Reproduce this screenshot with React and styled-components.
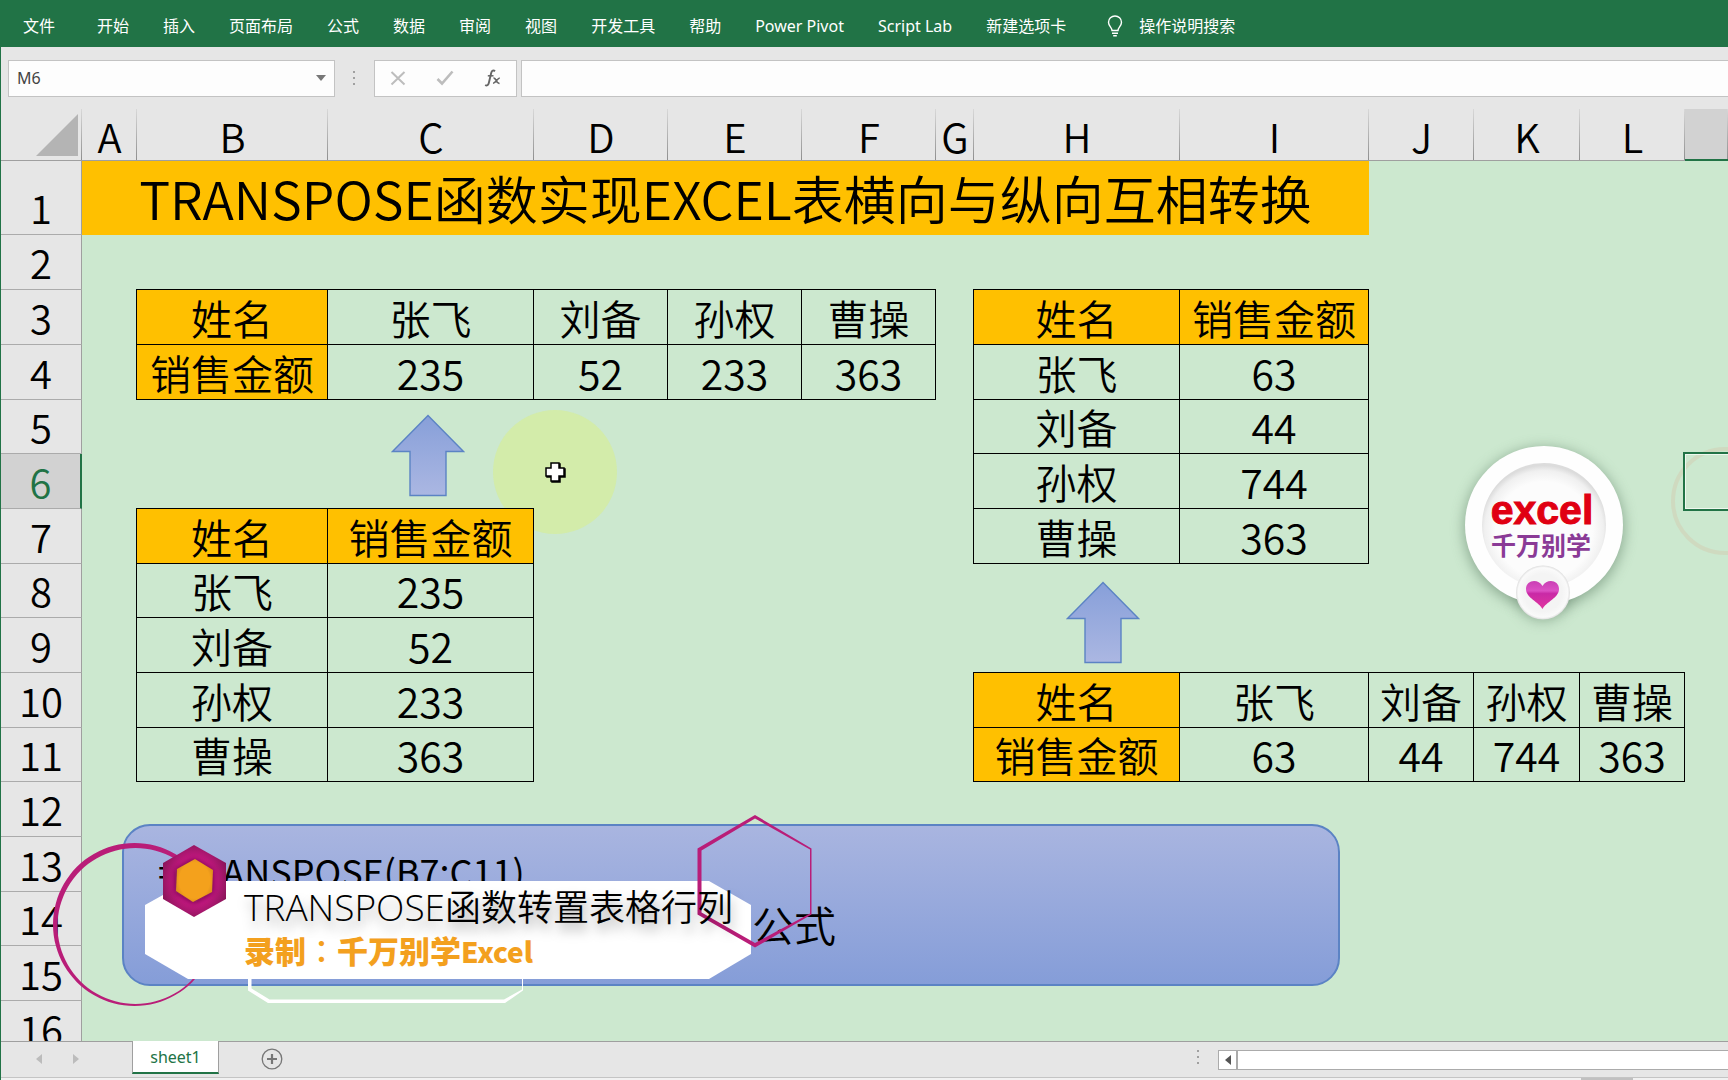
import React from "react";
import styled, { createGlobalStyle } from "styled-components";

const GREEN = "#217346";
const CHROME = "#e6e6e6";
const LINE = "#9f9f9f";
const SHEET = "#cce8cf";
const ORANGE = "#ffc000";
const PINK = "#b91d78";
const SHAPELINE = "#5b83c4";
const CJK = '"Noto Sans CJK SC", sans-serif';
const UIFONT = '"Noto Sans", "Noto Sans CJK SC", sans-serif';

const GlobalStyle = createGlobalStyle`
  * { box-sizing: border-box; }
  body { margin: 0; background: ${CHROME}; }
  button, input { font: inherit; color: inherit; margin: 0; padding: 0; border: 0; background: none; }
`;

const Page = styled.div`
  display: flex;
  flex-direction: column;
  height: 100vh;
  overflow: hidden;
  background: ${CHROME};
  font-family: ${UIFONT};
`;

const Ribbon = styled.nav`
  display: flex;
  align-items: center;
  gap: 34px;
  height: 47px;
  padding: 4px 23px 0;
  flex: none;
  background: ${GREEN};
  color: #fff;
  font-size: 16px;
  line-height: 24px;
  white-space: nowrap;
`;

const RibbonTab = styled.button`
  margin-right: ${props => (props.$file ? "8px" : "0")};
`;

const TellMe = styled.button`
  display: flex;
  align-items: center;
  gap: 16px;
  margin-left: 7px;
`;

const Body = styled.div`
  display: flex;
  flex-direction: column;
  flex: 1;
  min-height: 0;
  border-left: 1px solid ${GREEN};
`;

const FormulaBar = styled.div`
  display: flex;
  align-items: center;
  height: 62px;
  padding-left: 7px;
  flex: none;
`;

const Box = styled.div`
  display: flex;
  align-items: center;
  height: 37px;
  background: #fdfdfd;
  border: 1px solid #c3c3c3;
`;

const NameBox = styled(Box)`
  width: 327px;
  padding: 0 4px 0 8px;
  color: #444;
  font-size: 16px;

  input {
    flex: 1;
    min-width: 0;
  }
  button {
    display: flex;
    padding: 4px;
  }
`;

const Grip = styled.div`
  display: flex;
  flex-direction: column;
  gap: 4px;
  margin: 0 19px 0 18px;

  i {
    width: 2px;
    height: 2px;
    background: #a0a0a0;
  }
`;

const FxBox = styled(Box)`
  width: 143px;
  margin-right: 4px;
  gap: 30px;
  padding-left: 15px;

  button {
    display: flex;
  }
`;

const FormulaBox = styled(Box)`
  flex: 1;
  border-right: 0;

  input {
    width: 100%;
    padding: 0 8px;
  }
`;

const Sheet = styled.main`
  position: relative;
  flex: 1;
  min-height: 0;
  overflow: hidden;
  background: ${SHEET};
  font-family: ${CJK};
`;

const Grid = styled.table`
  position: relative;
  width: 100%;
  table-layout: fixed;
  border-collapse: separate;
  border-spacing: 0;
  font-size: 41px;
  font-weight: 350;
  line-height: 53px;
  color: #000;
`;

const Col = styled.col`
  width: ${props => (props.$w ? props.$w + "px" : "auto")};
`;

const ColHead = styled.th`
  height: 52px;
  padding: 0;
  font-size: 40px;
  font-weight: 350;
  line-height: 48px;
  vertical-align: bottom;
  background:
    linear-gradient(#d8d8d8, #8f8f8f) right / 1px 100% no-repeat,
    ${props => (props.$active ? "#d2d2d2" : CHROME)};
  border-bottom: ${props =>
    props.$active ? `2px solid ${GREEN}` : `1px solid ${LINE}`};
`;

const Corner = styled(ColHead)`
  svg {
    display: block;
    margin: 0 4px 4px auto;
  }
`;

const RowHead = styled.th`
  padding: 0;
  font-size: 40px;
  font-weight: 350;
  vertical-align: bottom;
  color: ${props => (props.$active ? GREEN : "#000")};
  background: ${props => (props.$active ? "#d2d2d2" : CHROME)};
  border-bottom: 1px solid #ababab;
  border-right: ${props =>
    props.$active ? `2px solid ${GREEN}` : `1px solid ${LINE}`};
`;

const Row = styled.tr`
  height: ${props => props.$h}px;
`;

const Cell = styled.td`
  padding: 0;
  text-align: center;
  vertical-align: bottom;
  white-space: nowrap;
  background: ${props => (props.$head ? ORANGE : "transparent")};
  ${props =>
    props.$boxed &&
    `
    border-right: 1px solid #000;
    border-bottom: 1px solid #000;
    box-shadow: -1px 0 #000, 0 -1px #000, -1px -1px #000;
  `}
`;

const TitleCell = styled(Cell)`
  background: ${ORANGE};
  font-size: 52px;
  line-height: 74px;
`;

/* objects that float over the cells */
const Floating = styled.div`
  position: absolute;
  left: ${props => props.$x}px;
  top: ${props => props.$y}px;

  > svg {
    display: block;
  }
`;

const Selection = styled(Floating)`
  right: -4px;
  height: 59px;
  border: 2px solid ${GREEN};
  box-shadow: inset 0 0 0 1px #eef8ef;
`;

const FormulaShape = styled(Floating)`
  width: 1218px;
  height: 162px;
  padding: 18px 34px;
  border: 2px solid ${SHAPELINE};
  border-radius: 28px;
  background: linear-gradient(#a9b5e0, #859dd8);
  font-size: 36px;
  line-height: 53px;
  white-space: nowrap;
`;

const ShapeLine = styled.p`
  margin: 0;
`;

const ShapeNote = styled(ShapeLine)`
  padding-left: 594px;
  font-size: 42px;
  font-weight: 350;
`;

const BannerTitle = styled(Floating)`
  font-family: "Open Sans", ${CJK};
  font-size: 37px;
  font-weight: 300;
  line-height: 48px;
  white-space: nowrap;
  color: #000;
  text-shadow: 2px 8px 12px rgba(0, 0, 0, 0.35);

  span {
    font-family: ${CJK};
    font-size: 36px;
    font-weight: 350;
  }
`;

const BannerAuthor = styled(Floating)`
  font-size: 31px;
  font-weight: 900;
  line-height: 40px;
  white-space: nowrap;
  color: #f3a01e;
`;

const Colon = styled.span`
  font-family: "Noto Sans CJK TC", sans-serif;
  font-weight: 500;
`;

const Latin = styled.span`
  font-size: 28px;
`;

const BottomBar = styled.footer`
  display: flex;
  align-items: flex-start;
  height: 37px;
  flex: none;
  border-top: 1px solid ${LINE};
  border-bottom: 1px solid #c4c4c4;
`;

const SheetNav = styled.div`
  display: flex;
  gap: 27px;
  width: 131px;
  padding: 12px 0 0 34px;

  button {
    display: flex;
  }
`;

const SheetTab = styled.button`
  width: 87px;
  height: 33px;
  margin-top: -1px;
  background: #fff;
  color: ${GREEN};
  font-size: 16px;
  line-height: 30px;
  border: 1px solid ${LINE};
  border-top: 0;
  border-bottom: 2px solid ${GREEN};
`;

const AddSheet = styled.button`
  display: flex;
  margin: 6px 0 0 42px;
`;

const Scroll = styled.div`
  display: flex;
  align-items: flex-start;
  width: 549px;
  margin-left: auto;
  padding-top: 8px;
`;

const ScrollTrack = styled.div`
  display: flex;
  flex: 1;
  height: 20px;
  background: #fff;
  border: 1px solid #ababab;
  border-right: 0;

  button {
    display: flex;
    align-items: center;
    justify-content: center;
    width: 19px;
    border-right: 2px solid #ababab;
  }
`;

const StatusStrip = styled.div`
  display: flex;
  justify-content: flex-end;
  height: 2px;
  padding-right: 95px;
  background: #f1f1f1;
  flex: none;

  i {
    width: 52px;
    background: #c0c0c0;
  }
`;

const tabs = [
  "开始",
  "插入",
  "页面布局",
  "公式",
  "数据",
  "审阅",
  "视图",
  "开发工具",
  "帮助",
  "Power Pivot",
  "Script Lab",
  "新建选项卡"
];

const columns = [
  ["A", 55],
  ["B", 191],
  ["C", 206],
  ["D", 134],
  ["E", 134],
  ["F", 134],
  ["G", 38],
  ["H", 206],
  ["I", 189],
  ["J", 105],
  ["K", 106],
  ["L", 105],
  ["M", 0]
];

// "*" marks a header cell
const data = {
  3: { B: "*姓名", C: "张飞", D: "刘备", E: "孙权", F: "曹操", H: "*姓名", I: "*销售金额" },
  4: { B: "*销售金额", C: "235", D: "52", E: "233", F: "363", H: "张飞", I: "63" },
  5: { H: "刘备", I: "44" },
  6: { H: "孙权", I: "744" },
  7: { B: "*姓名", C: "*销售金额", H: "曹操", I: "363" },
  8: { B: "张飞", C: "235" },
  9: { B: "刘备", C: "52" },
  10: { B: "孙权", C: "233", H: "*姓名", I: "张飞", J: "刘备", K: "孙权", L: "曹操" },
  11: { B: "曹操", C: "363", H: "*销售金额", I: "63", J: "44", K: "744", L: "363" }
};

const rows = Array.from({ length: 15 }, (_, i) => i + 2);

const Dots = () => (
  <Grip>
    <i />
    <i />
    <i />
  </Grip>
);

const Triangle = ({ points, size = 10, fill = "#777" }) => (
  <svg width={size} height={size} viewBox="0 0 10 10" aria-hidden="true">
    <polygon points={points} fill={fill} />
  </svg>
);

const UpArrow = ({ id }) => (
  <svg width="74" height="83" viewBox="0 0 74 83" aria-hidden="true">
    <defs>
      <linearGradient id={id} x1="0" y1="0" x2="0" y2="1">
        <stop offset="0" stopColor="#879fd9" />
        <stop offset="1" stopColor="#abb7e2" />
      </linearGradient>
    </defs>
    <path
      d="M37 1.5 72.5 37.5H55V81.500H19V37.500H1.500Z"
      fill={`url(#${id})`}
      stroke={SHAPELINE}
      strokeWidth="1.4"
    />
  </svg>
);

const Logo = () => (
  <svg width="200" height="210" viewBox="1444 425 200 210">
    <defs>
      <filter id="soft" x="-30%" y="-30%" width="160%" height="160%">
        <feGaussianBlur stdDeviation="7" />
      </filter>
      <radialGradient id="dish" cx="0.5" cy="0.54" r="0.52">
        <stop offset="0.75" stopColor="#fcfcfc" />
        <stop offset="0.92" stopColor="#f0f0f0" />
        <stop offset="1" stopColor="#dcdcdc" />
      </radialGradient>
      <radialGradient id="knob" cx="0.5" cy="0.5" r="0.5">
        <stop offset="0.7" stopColor="#f4f4f4" />
        <stop offset="0.92" stopColor="#fafafa" />
        <stop offset="1" stopColor="#dedede" />
      </radialGradient>
      <linearGradient id="heart" x1="0" y1="0" x2="0" y2="1">
        <stop offset="0" stopColor="#c93fb4" />
        <stop offset="0.35" stopColor="#dc50c4" />
        <stop offset="0.45" stopColor="#c92aa6" />
        <stop offset="1" stopColor="#e0359f" />
      </linearGradient>
    </defs>
    <circle cx="1544" cy="528" r="80" fill="#5f7f66" opacity="0.6" filter="url(#soft)" />
    <circle cx="1543" cy="594" r="27" fill="#5f7f66" opacity="0.5" filter="url(#soft)" />
    <circle cx="1544" cy="525" r="79" fill="#fefefe" />
    <circle cx="1544" cy="525" r="62" fill="url(#dish)" />
    <circle cx="1543" cy="592.500" r="27" fill="url(#knob)" />
    <path
      d="M1542.500 609C1539 602 1526 598 1526 589C1526 580 1538 578 1542.500 586C1547 578 1559 580 1559 589C1559 598 1546 602 1542.500 609Z"
      fill="url(#heart)"
    />
    <text
      x="1542"
      y="524"
      textAnchor="middle"
      fontFamily="Liberation Sans, sans-serif"
      fontSize="41"
      fontWeight="700"
      fill="#e00012"
      stroke="#e00012"
    >
      excel
    </text>
    <text
      x="1541"
      y="555"
      textAnchor="middle"
      fontFamily="Noto Sans CJK SC, sans-serif"
      fontSize="25"
      fontWeight="700"
      fill="#8a3a96"
    >
      千万别学
    </text>
  </svg>
);

const BannerArt = () => (
  <svg width="766" height="198" viewBox="50 812 766 198" aria-hidden="true">
    <defs>
      <radialGradient id="gem" cx="0.5" cy="0.5" r="0.55">
        <stop offset="0.6" stopColor="#c2187f" />
        <stop offset="1" stopColor="#8a1559" />
      </radialGradient>
      <radialGradient id="amber" cx="0.5" cy="0.5" r="0.55">
        <stop offset="0.75" stopColor="#f4a11c" />
        <stop offset="1" stopColor="#d98a1c" />
      </radialGradient>
      <filter id="glow" x="-30%" y="-30%" width="160%" height="160%">
        <feGaussianBlur stdDeviation="3" />
      </filter>
    </defs>
    <path
      fillRule="evenodd"
      fill={PINK}
      d="M134.500 843a81.500 81.500 0 1 0 .01 0Z M135.500 848a78 78 0 1 1 -.01 0Z"
    />
    <path
      fill="#fff"
      d="M248 975V990.500L268 1003H505L523 990.500V975H522V989.500L504 999.500H269.500L251.500 988.500V975Z"
    />
    <polygon points="188,881 709,881 751,905 751,954 709,979 188,979 145,954 145,905" fill="#fff" />
    <polygon points="194,845 226,863 226,899 194,917 163,899 163,863" fill="url(#gem)" />
    <polygon points="194,859 213,870 213,892 194,903 175,892 175,870" fill="#6d0f48" filter="url(#glow)" />
    <polygon points="195,859 213,870 212,892 193,902 176,891 177,869" fill="url(#amber)" />
    <path
      fillRule="evenodd"
      fill={PINK}
      d="M755 815 811.500 848.500V914.500L755 947.500 697.500 914.500V848.500Z M755 818.500 701.500 850.500V912.500L755 943 810 913.500V849.500Z"
    />
  </svg>
);

const SheetTable = () => (
  <Grid>
    <colgroup>
      <Col $w={81} />
      {columns.map(([name, w]) => (
        <Col key={name} $w={w} />
      ))}
    </colgroup>
    <thead>
      <tr>
        <Corner>
          <svg width="42" height="42" viewBox="0 0 42 42" aria-hidden="true">
            <polygon points="42,0 42,42 0,42" fill="#b4b4b4" />
          </svg>
        </Corner>
        {columns.map(([name]) => (
          <ColHead key={name} scope="col" $active={name === "M"}>
            {name === "M" ? "" : name}
          </ColHead>
        ))}
      </tr>
    </thead>
    <tbody>
      <Row $h={74}>
        <RowHead scope="row">1</RowHead>
        <TitleCell colSpan={9}>TRANSPOSE函数实现EXCEL表横向与纵向互相转换</TitleCell>
        <Cell colSpan={4} />
      </Row>
      {rows.map(n => (
        <Row key={n} $h={n % 3 === 2 && n > 2 ? 54 : 55}>
          <RowHead scope="row" $active={n === 6}>
            {n}
          </RowHead>
          {columns.map(([name]) => {
            const value = (data[n] && data[n][name]) || "";
            return (
              <Cell key={name} $boxed={value !== ""} $head={value[0] === "*"}>
                {value.replace("*", "")}
              </Cell>
            );
          })}
        </Row>
      ))}
    </tbody>
  </Grid>
);

export default function App() {
  return (
    <Page>
      <GlobalStyle />
      <Ribbon>
        <RibbonTab $file>文件</RibbonTab>
        {tabs.map(tab => (
          <RibbonTab key={tab}>{tab}</RibbonTab>
        ))}
        <TellMe>
          <svg width="16" height="22" viewBox="0 0 16 22" fill="none" stroke="#fff" strokeWidth="1.4" aria-hidden="true">
            <path d="M5 15.500C5 12.500 1.500 11 1.500 7.200A6.500 6.200 0 0 1 14.500 7.200C14.500 11 11 12.500 11 15.500Z" />
            <path d="M5 18.200H11M6.200 20.800H9.800" />
          </svg>
          操作说明搜索
        </TellMe>
      </Ribbon>
      <Body>
        <FormulaBar>
          <NameBox>
            <input aria-label="Name box" defaultValue="M6" />
            <button aria-label="Open name list">
              <Triangle points="0,2 10,2 5,8" />
            </button>
          </NameBox>
          <Dots />
          <FxBox>
            <button aria-label="Cancel">
              <svg width="16" height="16" viewBox="0 0 16 16" stroke="#bdbdbd" strokeWidth="2" aria-hidden="true">
                <path d="M1.500 2 14.500 14.500M14.500 2 1.500 14.500" />
              </svg>
            </button>
            <button aria-label="Enter">
              <svg width="18" height="16" viewBox="0 0 18 16" fill="none" stroke="#bdbdbd" strokeWidth="2.600" aria-hidden="true">
                <path d="M1.500 9 6 13.500 16.500 1.500" />
              </svg>
            </button>
            <button aria-label="Insert function">
              <svg width="18" height="18" viewBox="0 0 18 18" fill="none" stroke="#666" aria-hidden="true">
                <path d="M11 2.200C9.500 .8 7.800 1.500 7.200 4L4.800 14C4.300 16.300 2.800 17 1.200 16" strokeWidth="1.900" />
                <path d="M3.800 6.800H9.500" strokeWidth="1.500" />
                <path d="M9.500 9.200C12.500 8.500 12 15 15.500 14.300M15.800 9C13.500 9 11.500 14.500 9 14.300" strokeWidth="1.600" />
              </svg>
            </button>
          </FxBox>
          <FormulaBox>
            <input aria-label="Formula bar" />
          </FormulaBox>
        </FormulaBar>
        <Sheet>
          <Floating $x={491} $y={300}>
            <svg width="126" height="126" viewBox="0 0 126 126" aria-hidden="true">
              <circle cx="63" cy="63" r="62" fill="#e0f364" opacity="0.35" />
            </svg>
          </Floating>
          <SheetTable />
          <Floating $x={543} $y={352}>
            <svg width="22" height="22" viewBox="0 0 22 22" strokeWidth="1.5" stroke="#000" aria-hidden="true">
              <path d="M8 3h8v5h5v8h-5v5h-8v-5h-5v-8h5z" />
              <path d="M7 2h8v5h5v8h-5v5h-8v-5h-5v-8h5z" fill="#fff" />
            </svg>
          </Floating>
          <Floating $x={390} $y={305}>
            <UpArrow id="arrowLeft" />
          </Floating>
          <Floating $x={1065} $y={472}>
            <UpArrow id="arrowRight" />
          </Floating>
          <Floating $x={1443} $y={316}>
            <Logo />
          </Floating>
          <Floating $x={1668} $y={336}>
            <svg width="112" height="112" viewBox="0 0 112 112" aria-hidden="true">
              <circle cx="56" cy="56" r="52" fill="none" stroke="#d8b9a0" strokeOpacity="0.3" strokeWidth="4" />
            </svg>
          </Floating>
          <Selection $x={1682} $y={343} />
          <FormulaShape $x={121} $y={715}>
            <ShapeLine>=TRANSPOSE(B7:C11)</ShapeLine>
            <ShapeNote>公式</ShapeNote>
          </FormulaShape>
          <Floating $x={49} $y={703}>
            <BannerArt />
          </Floating>
          <BannerTitle $x={243} $y={772}>
            TRANSPOSE<span>函数转置表格行列</span>
          </BannerTitle>
          <BannerAuthor $x={243} $y={821}>
            录制<Colon>：</Colon>千万别学<Latin>Excel</Latin>
          </BannerAuthor>
        </Sheet>
        <BottomBar>
          <SheetNav>
            <button aria-label="Previous sheet">
              <Triangle points="1,5 7,0 7,10" fill="#bcbcbc" />
            </button>
            <button aria-label="Next sheet">
              <Triangle points="7,5 1,0 1,10" fill="#bcbcbc" />
            </button>
          </SheetNav>
          <SheetTab>sheet1</SheetTab>
          <AddSheet aria-label="New sheet">
            <svg width="22" height="22" viewBox="0 0 22 22" fill="none" stroke="#777" aria-hidden="true">
              <circle cx="11" cy="11" r="9.800" strokeWidth="1.300" />
              <path d="M11 6V16M6 11H16" strokeWidth="2.200" />
            </svg>
          </AddSheet>
          <Scroll>
            <div>
              <Dots />
            </div>
            <ScrollTrack>
              <button aria-label="Scroll left">
                <Triangle points="2,5 8,0 8,10" fill="#555" />
              </button>
            </ScrollTrack>
          </Scroll>
        </BottomBar>
        <StatusStrip>
          <i />
        </StatusStrip>
      </Body>
    </Page>
  );
}
